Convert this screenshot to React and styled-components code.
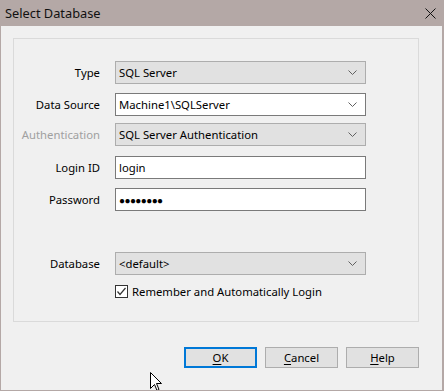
import styled, { createGlobalStyle } from "styled-components";

const GlobalStyle = createGlobalStyle`
  html, body {
    margin: 0;
    padding: 0;
    background: #ffffff;
  }
  body {
    font-family: "Noto Sans", "Liberation Sans", sans-serif;
    font-size: 11.3px;
    color: #000;
  }
`;

const Window = styled.div`
  position: relative;
  width: 444px;
  height: 391px;
  box-sizing: border-box;
  border: 1px solid #b4a8a6;
  border-top: none;
  border-right-width: 2px;
  background: #f0f0f0;
  display: flex;
  flex-direction: column;
  overflow: hidden;
`;

const TitleBar = styled.div`
  height: 26px;
  margin: 0 -2px 0 -1px;
  background: #b4a8a6;
  display: flex;
  align-items: center;
  justify-content: space-between;
  padding: 0 8px 0 5px;
`;

const Title = styled.span`
  font-size: 12.8px;
  color: #111;
  line-height: 26px;
`;

const Body = styled.div`
  flex: 1;
  display: flex;
  flex-direction: column;
  padding: 12px 23px 0 12px;
`;

const GroupBox = styled.div`
  box-sizing: border-box;
  width: 406px;
  height: 284px;
  border: 1px solid #dadada;
  padding: 22px 0 0 0;
  display: flex;
  flex-direction: column;
`;

const Row = styled.div`
  display: grid;
  grid-template-columns: 86px 251px;
  column-gap: 15px;
  align-items: center;
  margin-top: ${(p) => p.$mt || 0}px;
`;

const Label = styled.span`
  text-align: right;
  color: ${(p) => (p.$disabled ? "#a0a0a0" : "#000")};
`;

const Field = styled.div`
  box-sizing: border-box;
  height: 23px;
  border: 1px solid ${(p) => (p.$readonly ? "#adadad" : "#7a7a7a")};
  background: ${(p) => (p.$readonly ? "#e1e1e1" : "#ffffff")};
  display: flex;
  align-items: center;
  justify-content: space-between;
  padding: 0 8px 0 3px;
  white-space: nowrap;
`;

const Dots = styled.span`
  font-size: 10px;
  letter-spacing: -0.6px;
`;

const CheckRow = styled.label`
  display: flex;
  align-items: center;
  gap: 4px;
`;

const CheckBox = styled.span`
  box-sizing: border-box;
  width: 13px;
  height: 13px;
  border: 1px solid #333;
  background: #fff;
  display: flex;
  align-items: center;
  justify-content: center;
`;

const ButtonBar = styled.div`
  display: flex;
  justify-content: flex-end;
  gap: 8px;
  margin-top: 25px;
`;

const Button = styled.button`
  box-sizing: border-box;
  width: 73px;
  height: 21px;
  padding: 0;
  font-family: inherit;
  font-size: 11.3px;
  color: #000;
  background: #e1e1e1;
  border: ${(p) => (p.$default ? "2px solid #0078d7" : "1px solid #adadad")};
  u {
    text-decoration-thickness: 1px;
    text-underline-offset: 2px;
  }
`;

const Cursor = styled.svg`
  position: absolute;
  left: 149px;
  top: 372px;
`;

const Chevron = () => (
  <svg width="9" height="5" viewBox="0 0 9 5">
    <path d="M0.5 0.5 L4.5 4.5 L8.5 0.5" fill="none" stroke="#606060" strokeWidth="1" />
  </svg>
);

const Combo = ({ value, readonly }) => (
  <Field $readonly={readonly}>
    <span>{value}</span>
    <Chevron />
  </Field>
);

const CloseIcon = () => (
  <svg width="11" height="11" viewBox="0 0 11 11">
    <path d="M0.5 0.5 L10.5 10.5 M10.5 0.5 L0.5 10.5" stroke="#111" strokeWidth="1" />
  </svg>
);

export default function App() {
  return (
    <>
      <GlobalStyle />
      <Window>
        <TitleBar>
          <Title>Select Database</Title>
          <CloseIcon />
        </TitleBar>
        <Body>
          <GroupBox>
            <Row>
              <Label>Type</Label>
              <Combo value="SQL Server" readonly />
            </Row>
            <Row $mt={9}>
              <Label>Data Source</Label>
              <Combo value="Machine1\SQLServer" />
            </Row>
            <Row $mt={7}>
              <Label $disabled>Authentication</Label>
              <Combo value="SQL Server Authentication" readonly />
            </Row>
            <Row $mt={10}>
              <Label>Login ID</Label>
              <Field>login</Field>
            </Row>
            <Row $mt={9}>
              <Label>Password</Label>
              <Field>
                <Dots>●●●●●●●●</Dots>
              </Field>
            </Row>
            <Row $mt={41}>
              <Label>Database</Label>
              <Combo value="<default>" readonly />
            </Row>
            <Row $mt={9}>
              <span />
              <CheckRow>
                <CheckBox>
                  <svg width="11" height="11" viewBox="0 0 11 11">
                    <path d="M1.5 5.5 L4 8.5 L9.5 2" fill="none" stroke="#333" strokeWidth="1.2" />
                  </svg>
                </CheckBox>
                Remember and Automatically Login
              </CheckRow>
            </Row>
          </GroupBox>
          <ButtonBar>
            <Button $default>
              <u>O</u>K
            </Button>
            <Button>
              <u>C</u>ancel
            </Button>
            <Button>
              <u>H</u>elp
            </Button>
          </ButtonBar>
        </Body>
        <Cursor width="13" height="20" viewBox="0 0 13 20">
          <path d="M0.5 0.5 L0.5 16.5 L4.5 12.5 L7 18.5 L9 17.5 L6.5 11.5 L11.5 11.5 Z" fill="#fff" stroke="#000" strokeWidth="1" />
        </Cursor>
      </Window>
    </>
  );
}
